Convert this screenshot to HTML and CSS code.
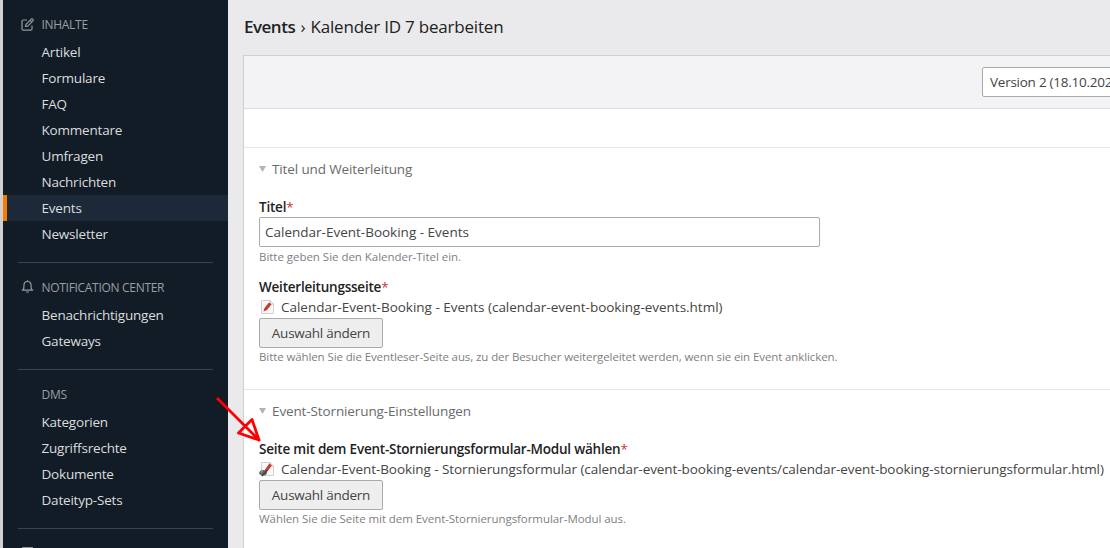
FILE: index.html
```html
<!DOCTYPE html>
<html lang="de">
<head>
<meta charset="utf-8">
<title>Kalender ID 7 bearbeiten</title>
<link rel="stylesheet" href="styles.css">
</head>
<body>
<div class="app">
  <nav class="sidebar">
    <section class="group">
      <h2 class="group-title"><svg class="group-icon" viewBox="0 0 13 13"><path d="M6 2H2.200Q1 2 1 3.200V11Q1 12.200 2.200 12.200H9.800Q11 12.200 11 11V7.500M4.500 8.500L5 6.300L10.200 1.100Q11 .5 11.800 1.200T12 2.900L6.800 8.100ZM9 2.300L10.800 4.100"/></svg><span>INHALTE</span></h2>
      <ul class="items">
        <li>Artikel</li><li>Formulare</li><li>FAQ</li><li>Kommentare</li><li>Umfragen</li><li>Nachrichten</li><li class="active">Events</li><li>Newsletter</li>
      </ul>
    </section>
    <section class="group">
      <h2 class="group-title"><svg class="group-icon bell" viewBox="0 0 13 13"><path d="M.8 10.200H12.200M2 10.200Q3 9 3 5Q3 1.500 6.500 1.500T10 5Q10 9 11 10.200M6.500 .3V1.500M5.300 11.500Q6.500 13 7.700 11.500"/></svg><span>NOTIFICATION CENTER</span></h2>
      <ul class="items">
        <li>Benachrichtigungen</li><li>Gateways</li>
      </ul>
    </section>
    <section class="group">
      <h2 class="group-title"><i class="group-icon"></i><span>DMS</span></h2>
      <ul class="items">
        <li>Kategorien</li><li>Zugriffsrechte</li><li>Dokumente</li><li>Dateityp-Sets</li>
      </ul>
    </section>
    <section class="group"><i class="cut-icon"></i></section>
  </nav>
  <main class="main">
    <h1 class="headline"><b>Events</b> › <span>Kalender ID 7 bearbeiten</span></h1>
    <div class="panel">
      <div class="toolbar"><div class="version">Version 2 (18.10.202</div></div>
      <div class="spacer"></div>
      <section class="fieldset">
        <h3 class="legend"><i class="caret"></i><span>Titel und Weiterleitung</span></h3>
        <div class="field">
          <label class="label">Titel<em>*</em></label>
          <div class="input">Calendar-Event-Booking - Events</div>
          <p class="hint">Bitte geben Sie den Kalender-Titel ein.</p>
        </div>
        <div class="field">
          <label class="label">Weiterleitungsseite<em>*</em></label>
          <div class="page">
            <svg class="page-icon" viewBox="0 0 16 16"><path class="sheet" d="M2.500 1.500H11L14.500 5V14.500H2.500Z"/><path class="fold" d="M11 1.500V5H14.500"/><path class="pencil" d="M4.500 12.500L5.500 9L10 3.500L12.500 5.200L8 11Z"/></svg>
            <span>Calendar-Event-Booking - Events (calendar-event-booking-events.html)</span>
          </div>
          <div class="button">Auswahl ändern</div>
          <p class="hint under-button">Bitte wählen Sie die Eventleser-Seite aus, zu der Besucher weitergeleitet werden, wenn sie ein Event anklicken.</p>
        </div>
      </section>
      <section class="fieldset second">
        <h3 class="legend"><i class="caret"></i><span>Event-Stornierung-Einstellungen</span></h3>
        <div class="field">
          <label class="label">Seite mit dem Event-Stornierungsformular-Modul wählen<em>*</em></label>
          <div class="page long">
            <svg class="page-icon" viewBox="0 0 16 16"><path class="sheet" d="M2.500 1.500H11L14.500 5V14.500H2.500Z"/><path class="fold" d="M11 1.500V5H14.500"/><path class="pencil" d="M5.500 11L6.200 8.500L10.300 2.500L13 4.200L8 11Z"/><path class="eye" d="M0 12Q1 9 4.300 9Q7.500 9 8.200 12Q7.300 14.700 4.300 14.700Q1 14.700 0 12Z"/><path class="slash" d="M3 15L8 9"/><path class="glint" d="M1.800 11.500L3.500 10.300"/></svg>
            <span>Calendar-Event-Booking - Stornierungsformular (calendar-event-booking-events/calendar-event-booking-stornierungsformular.html)</span>
          </div>
          <div class="button">Auswahl ändern</div>
          <p class="hint under-button short">Wählen Sie die Seite mit dem Event-Stornierungsformular-Modul aus.</p>
        </div>
      </section>
    </div>
  </main>
  <svg class="arrow" viewBox="0 0 48 48"><path d="M2 3L45 46M23.500 38L37 24.500L44 45Z"/></svg>
</div>
</body>
</html>
```
FILE: styles.css
```css
* { box-sizing: border-box; }
body { margin: 0; background: #eaeaec; }
h1, h2, h3, p, ul { margin: 0; padding: 0; font-weight: 400; list-style: none; }
.app {
  position: relative; display: flex; width: 1110px; height: 548px; overflow: hidden;
  border-left: 3px solid #d0d0d3;
  font: 13.5px/20px "Open Sans", "Noto Sans", sans-serif; color: #444; white-space: nowrap;
}
.sidebar { flex: none; width: 225px; padding-top: 9px; background: #121c26; color: #dbdcde; }
.group + .group::before { content: ""; display: block; height: 1px; margin: 15px 15px 9px; background: #3a434c; }
.group-title { display: flex; align-items: center; height: 30px; padding-left: 18px; gap: 7.500px; font-size: 12px; letter-spacing: -.3px; color: #9a9fa4; }
.group-title span { padding-top: 2px; }
.group-icon { width: 13px; height: 13px; fill: none; stroke: #929aa2; stroke-width: 1.2; stroke-linejoin: round; }
.bell { margin-top: -1px; }
.items li { height: 26px; padding-left: 38.500px; line-height: 26px; letter-spacing: -.2px; }
.items .active { border-left: 4px solid #f47c00; padding-left: 34.500px; background: #1b2939; }
.cut-icon { display: block; width: 11px; height: 3px; margin: 18px 0 0 19px; background: #92969b; }
.main { flex: none; width: 882px; padding-left: 15px; }
.headline { height: 55px; padding: 15px 0 0 1px; font-size: 17px; line-height: 24px; letter-spacing: -.2px; color: #222; }
.headline b, .label { font-weight: 600; }
.headline b { margin-right: 1px; letter-spacing: -.5px; }
.headline span { margin-left: 1px; }
.panel { height: 493px; border: solid #d0d0d3; border-width: 1px 0 0 1px; background: #fff; }
.toolbar { display: flex; height: 53px; padding: 11px 0 0 738px; border-bottom: 1px solid #dddde0; background: #f3f3f5; }
.version { flex: none; width: 260px; height: 30px; padding-left: 7px; border: 1px solid #aaa; border-radius: 2px; background: #fff; line-height: 28px; letter-spacing: -.25px; }
.spacer { height: 39px; border-bottom: 1px solid #e6e6e8; }
.fieldset { height: 242px; padding: 11px 0 0 15px; border-bottom: 1px solid #e6e6e8; }
.second { border: 0; }
.legend { display: flex; align-items: center; height: 20px; margin-bottom: 18px; gap: 6px; font-size: 13.5px; letter-spacing: -.12px; color: #6a6a6c; }
.caret { width: 7px; height: 6px; background: #b3b3b5; clip-path: polygon(0 0, 100% 0, 50% 100%); }
.field + .field { margin-top: 10px; }
.label { display: block; height: 20px; letter-spacing: -.22px; color: #222; }
.label em { color: #c33; font-style: normal; font-weight: 400; }
.input { width: 561px; height: 30px; padding-left: 5px; border: 1px solid #aaa; border-radius: 2px; line-height: 28px; }
.hint { height: 20px; font-size: 11.5px; letter-spacing: -.03px; color: #808082; }
.page { display: flex; align-items: flex-start; height: 21px; gap: 6px; letter-spacing: -.015px; }
.long { letter-spacing: -.065px; }
.page span { line-height: 20px; }
.page-icon { flex: none; width: 16px; height: 16px; margin-top: 2px; fill: none; }
.sheet { fill: #f8f8f8; stroke: #d1d1d1; }
.fold { stroke: #c4c4c4; }
.pencil { fill: #c83a2c; }
.eye { fill: #666; }
.slash { stroke: #444; stroke-width: 1.2; }
.glint { stroke: #bbb; }
.button { width: 124px; height: 30px; border: 1px solid #aaa; border-radius: 2px; background: #eee; line-height: 28px; letter-spacing: -.25px; text-align: center; }
.under-button { margin-top: -1px; letter-spacing: -.1px; }
.short { letter-spacing: -.06px; }
.arrow { position: absolute; left: 212px; top: 395px; width: 48px; height: 48px; fill: none; stroke: #f00; stroke-width: 2.8; stroke-linejoin: round; }
```
